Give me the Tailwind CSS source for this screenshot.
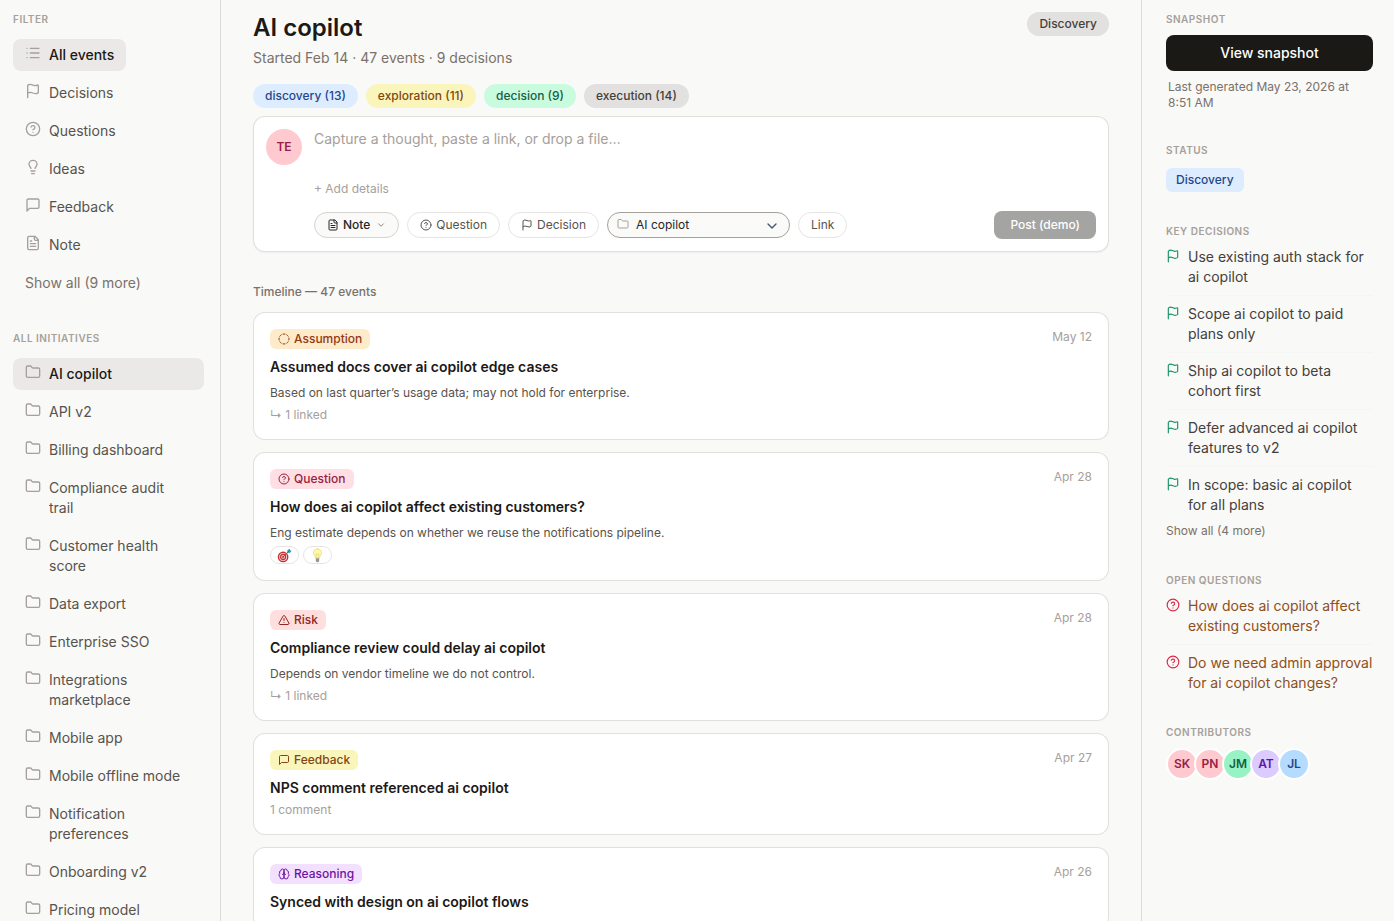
<!DOCTYPE html>
<html lang="en">
<head>
	<meta charset="UTF-8">
	<meta name="viewport" content="width=device-width, initial-scale=1.0">
	<title>AI copilot</title>
	<script src="https://cdn.jsdelivr.net/npm/@tailwindcss/browser@4"></script>
</head>
<body class="bg-[#f9f9f7] font-['Inter',sans-serif] text-stone-700">

	<!-- icons -->
	<svg class="hidden">
		<symbol id="list" viewBox="0 0 24 24"><path d="M3 5h.01M3 12h.01M3 19h.01M8 5h13M8 12h13M8 19h13"/></symbol>
		<symbol id="flag" viewBox="0 0 24 24"><path d="M4 22V4a1 1 0 0 1 .4-.8A6 6 0 0 1 8 2c3 0 5 2 7.333 2q2 0 3.067-.8A1 1 0 0 1 20 4v10a1 1 0 0 1-.4.8A6 6 0 0 1 16 16c-3 0-5-2-8-2a6 6 0 0 0-4 1.528"/></symbol>
		<symbol id="question" viewBox="0 0 24 24"><circle cx="12" cy="12" r="10"/><path d="M9.09 9a3 3 0 0 1 5.83 1c0 2-3 3-3 3M12 17h.01"/></symbol>
		<symbol id="bulb" viewBox="0 0 24 24"><path d="M15 14c.2-1 .7-1.7 1.5-2.5 1-.9 1.5-2.2 1.5-3.5A6 6 0 0 0 6 8c0 1 .2 2.2 1.5 3.5.7.7 1.3 1.5 1.5 2.5M9 18h6M10 22h4"/></symbol>
		<symbol id="message" viewBox="0 0 24 24"><path d="M21 15a2 2 0 0 1-2 2H7l-4 4V5a2 2 0 0 1 2-2h14a2 2 0 0 1 2 2z"/></symbol>
		<symbol id="file" viewBox="0 0 24 24"><path d="M15 2H6a2 2 0 0 0-2 2v16a2 2 0 0 0 2 2h12a2 2 0 0 0 2-2V7zM14 2v4a2 2 0 0 0 2 2h4M10 9H8M16 13H8M16 17H8"/></symbol>
		<symbol id="folder" viewBox="0 0 24 24"><path d="M20 20a2 2 0 0 0 2-2V8a2 2 0 0 0-2-2h-7.9a2 2 0 0 1-1.69-.9L9.6 3.9A2 2 0 0 0 7.93 3H4a2 2 0 0 0-2 2v13a2 2 0 0 0 2 2Z"/></symbol>
		<symbol id="dashed" viewBox="0 0 24 24"><path d="M10.1 2.182a10 10 0 0 1 3.8 0M13.9 21.818a10 10 0 0 1-3.8 0M17.609 3.721a10 10 0 0 1 2.69 2.7M2.182 13.9a10 10 0 0 1 0-3.8M20.279 17.609a10 10 0 0 1-2.7 2.69M21.818 10.1a10 10 0 0 1 0 3.8M3.721 6.391a10 10 0 0 1 2.7-2.69M6.391 20.279a10 10 0 0 1-2.69-2.7"/></symbol>
		<symbol id="alert" viewBox="0 0 24 24"><path d="m21.73 18-8-14a2 2 0 0 0-3.48 0l-8 14A2 2 0 0 0 4 21h16a2 2 0 0 0 1.73-3M12 9v4M12 17h.01"/></symbol>
		<symbol id="brain" viewBox="0 0 24 24"><path d="M12 5a3 3 0 1 0-5.997.125 4 4 0 0 0-2.526 5.77 4 4 0 0 0 .556 6.588A4 4 0 1 0 12 18ZM12 5a3 3 0 1 1 5.997.125 4 4 0 0 1 2.526 5.77 4 4 0 0 1-.556 6.588A4 4 0 1 1 12 18ZM15 13a4.5 4.5 0 0 1-3-4 4.5 4.5 0 0 1-3 4"/></symbol>
		<symbol id="chevron" viewBox="0 0 24 24"><path d="m6 9 6 6 6-6"/></symbol>
		<!-- reactions -->
		<symbol id="target" viewBox="0 0 16 16">
			<g stroke="none">
				<circle cx="6.5" cy="9.5" r="5.7" fill="#c5302f"/>
				<circle cx="6.5" cy="9.5" r="4.2" fill="#f3dcdc"/>
				<circle cx="6.5" cy="9.5" r="3.3" fill="#c5302f"/>
				<circle cx="6.5" cy="9.5" r="2" fill="#f3dcdc"/>
				<circle cx="6.5" cy="9.5" r="1.1" fill="#c5302f"/>
				<path d="M11 5V2.5L13.5.8l.5 1.6 1.7.6L13.600 5.200z" fill="#2f9fb8"/>
			</g>
			<path d="M6.500 9.500 13 3" stroke="#3b6f86" stroke-width="1"/>
		</symbol>
		<symbol id="lamp" viewBox="0 0 16 16">
			<path d="M8 .8a4.300 4.300 0 0 0-4.300 4.300c0 2.200 1.900 3.200 2.300 5.700h4c.4-2.500 2.300-3.500 2.300-5.700A4.300 4.300 0 0 0 8 .8z" fill="#fdf7b0" stroke="#efe27a" stroke-width="1"/>
			<path d="M7 10.500 6.400 6.200l1.600.8 1.600-.8L9 10.500" fill="none" stroke="#e3cf62" stroke-width=".6"/>
			<path d="M6.200 11h3.600v2.800L8.800 15.200H7.200L6.200 13.800z" fill="#96968f" stroke="none"/>
		</symbol>
	</svg>

	<div class="flex h-screen [&_svg]:shrink-0 [&_svg]:fill-none [&_svg]:stroke-current [&_svg]:[stroke-linecap:round] [&_svg]:[stroke-linejoin:round] [&_svg]:stroke-2">

		<!-- sidebar -->
		<aside class="w-[221px] shrink-0 overflow-y-auto [scrollbar-width:none] border-r border-stone-300/80 pt-3 pb-6 pl-[13px] pr-4 text-sm">
			<h2 class="text-[10px] leading-[15px] font-semibold tracking-wider uppercase text-stone-400">Filter</h2>
			<nav class="mt-3 flex flex-col items-start gap-1.5 [&_svg]:size-4 [&_svg]:text-stone-400">
				<a href="#" class="flex gap-2 rounded-lg bg-stone-200/80 px-3 py-1.5 font-medium text-stone-900"><svg><use href="#list"/></svg>All events</a>
				<a href="#" class="flex gap-2 rounded-lg px-3 py-1.5 text-stone-600"><svg><use href="#flag"/></svg>Decisions</a>
				<a href="#" class="flex gap-2 rounded-lg px-3 py-1.5 text-stone-600"><svg><use href="#question"/></svg>Questions</a>
				<a href="#" class="flex gap-2 rounded-lg px-3 py-1.5 text-stone-600"><svg><use href="#bulb"/></svg>Ideas</a>
				<a href="#" class="flex gap-2 rounded-lg px-3 py-1.5 text-stone-600"><svg><use href="#message"/></svg>Feedback</a>
				<a href="#" class="flex gap-2 rounded-lg px-3 py-1.5 text-stone-600"><svg><use href="#file"/></svg>Note</a>
				<button type="button" class="px-3 py-1.5 text-stone-500">Show all (9 more)</button>
			</nav>

			<h2 class="mt-8 text-[10px] leading-[15px] font-semibold tracking-wider uppercase text-stone-400">All initiatives</h2>
			<nav class="mt-3 flex flex-col gap-1.5 [&_svg]:size-4 [&_svg]:text-stone-400">
				<a href="#" class="flex gap-2 rounded-lg bg-stone-200/80 px-3 py-1.5 font-medium text-stone-900"><svg><use href="#folder"/></svg>AI copilot</a>
				<a href="#" class="flex gap-2 rounded-lg px-3 py-1.5 text-stone-600"><svg><use href="#folder"/></svg>API v2</a>
				<a href="#" class="flex gap-2 rounded-lg px-3 py-1.5 text-stone-600"><svg><use href="#folder"/></svg>Billing dashboard</a>
				<a href="#" class="flex gap-2 rounded-lg px-3 py-1.5 text-stone-600"><svg><use href="#folder"/></svg>Compliance audit trail</a>
				<a href="#" class="flex gap-2 rounded-lg px-3 py-1.5 text-stone-600"><svg><use href="#folder"/></svg>Customer health score</a>
				<a href="#" class="flex gap-2 rounded-lg px-3 py-1.5 text-stone-600"><svg><use href="#folder"/></svg>Data export</a>
				<a href="#" class="flex gap-2 rounded-lg px-3 py-1.5 text-stone-600"><svg><use href="#folder"/></svg>Enterprise SSO</a>
				<a href="#" class="flex gap-2 rounded-lg px-3 py-1.5 text-stone-600"><svg><use href="#folder"/></svg>Integrations marketplace</a>
				<a href="#" class="flex gap-2 rounded-lg px-3 py-1.5 text-stone-600"><svg><use href="#folder"/></svg>Mobile app</a>
				<a href="#" class="flex gap-2 rounded-lg px-3 py-1.5 text-stone-600"><svg><use href="#folder"/></svg>Mobile offline mode</a>
				<a href="#" class="flex gap-2 rounded-lg px-3 py-1.5 text-stone-600"><svg><use href="#folder"/></svg>Notification preferences</a>
				<a href="#" class="flex gap-2 rounded-lg px-3 py-1.5 text-stone-600"><svg><use href="#folder"/></svg>Onboarding v2</a>
				<a href="#" class="flex gap-2 rounded-lg px-3 py-1.5 text-stone-600"><svg><use href="#folder"/></svg>Pricing model</a>
			</nav>
		</aside>

		<!-- timeline -->
		<main class="min-w-0 flex-1 overflow-y-auto [scrollbar-width:none] px-8 pt-3 pb-8">
			<header class="flex items-start justify-between">
				<div>
					<h1 class="text-2xl font-semibold text-stone-900">AI copilot</h1>
					<p class="mt-1 text-sm text-stone-500">Started Feb 14 · 47 events · 9 decisions</p>
				</div>
				<span class="rounded-full bg-[#e2e1df] px-3 py-1 text-xs font-medium text-stone-700">Discovery</span>
			</header>

			<div class="mt-4 flex flex-wrap gap-2 text-xs font-medium">
				<button type="button" class="rounded-full bg-[#deecff] px-3 py-1 text-[#24478a]">discovery (13)</button>
				<button type="button" class="rounded-full bg-[#faf5bb] px-3 py-1 text-[#824613]">exploration (11)</button>
				<button type="button" class="rounded-full bg-[#c9fbde] px-3 py-1 text-[#155f46]">decision (9)</button>
				<button type="button" class="rounded-full bg-[#e2e1df] px-3 py-1 text-stone-700">execution (14)</button>
			</div>

			<form class="mt-2 flex gap-3 rounded-xl border border-stone-300/70 bg-white p-3 shadow-xs">
				<div class="flex size-9 shrink-0 items-center justify-center rounded-full bg-[#ffc9d0] text-xs font-semibold text-[#982044]">TE</div>
				<div class="min-w-0 flex-1">
					<textarea aria-label="Capture" placeholder="Capture a thought, paste a link, or drop a file…" class="block h-11 w-full resize-none text-sm outline-none placeholder:text-stone-400"></textarea>
					<button type="button" class="mt-2 block text-xs text-stone-400">+ Add details</button>
					<div class="mt-3.5 flex items-center gap-2 text-xs text-stone-600">
						<button type="button" class="flex items-center gap-1 rounded-full border border-stone-300 bg-stone-50 px-3 py-1 font-medium text-stone-800"><svg class="size-3"><use href="#file"/></svg>Note<svg class="ml-0.5 size-2.5 text-stone-500"><use href="#chevron"/></svg></button>
						<button type="button" class="flex items-center gap-1 rounded-full border border-stone-200 bg-white px-3 py-1"><svg class="size-3"><use href="#question"/></svg>Question</button>
						<button type="button" class="flex items-center gap-1 rounded-full border border-stone-200 bg-white px-3 py-1"><svg class="size-3"><use href="#flag"/></svg>Decision</button>
						<div class="relative">
							<select aria-label="Initiative" class="w-[183px] appearance-none rounded-full border border-stone-400 bg-stone-50 py-1 pl-7 pr-8 text-xs text-stone-800">
								<option>AI copilot</option>
								<option>API v2</option>
							</select>
							<svg class="pointer-events-none absolute top-1.5 left-2.5 size-3 text-stone-400"><use href="#folder"/></svg>
							<svg class="pointer-events-none absolute top-1.5 right-2.5 size-4 text-slate-600"><use href="#chevron"/></svg>
						</div>
						<button type="button" class="rounded-full border border-stone-200 bg-white px-3 py-1">Link</button>
						<button type="button" class="ml-auto rounded-lg bg-[#a4a4a2] px-4 py-1.5 font-medium text-white">Post (demo)</button>
					</div>
				</div>
			</form>

			<h2 class="mt-8 text-xs font-medium text-stone-500">Timeline — 47 events</h2>

			<div class="mt-3 flex flex-col gap-3 text-xs">
				<article class="rounded-xl border border-stone-300/70 bg-white p-4">
					<div class="flex items-start justify-between">
						<span class="flex items-center gap-1 rounded-md bg-[#fdebc9] px-2 py-0.5 font-medium text-[#933817]"><svg class="size-3"><use href="#dashed"/></svg>Assumption</span>
						<time class="text-stone-400">May 12</time>
					</div>
					<h3 class="mt-2 text-sm font-semibold text-stone-900">Assumed docs cover ai copilot edge cases</h3>
					<p class="mt-2 text-stone-600">Based on last quarter’s usage data; may not hold for enterprise.</p>
					<p class="mt-1.5 text-stone-400">↳ 1 linked</p>
				</article>

				<article class="rounded-xl border border-stone-300/70 bg-white p-4">
					<div class="flex items-start justify-between">
						<span class="flex items-center gap-1 rounded-md bg-[#ffdfe3] px-2 py-0.5 font-medium text-[#982044]"><svg class="size-3"><use href="#question"/></svg>Question</span>
						<time class="text-stone-400">Apr 28</time>
					</div>
					<h3 class="mt-2 text-sm font-semibold text-stone-900">How does ai copilot affect existing customers?</h3>
					<p class="mt-2 text-stone-600">Eng estimate depends on whether we reuse the notifications pipeline.</p>
					<div class="mt-[5px] flex gap-1">
						<button type="button" aria-label="Target" class="flex h-[18px] items-center rounded-full border border-stone-200 px-1.5"><svg class="size-[15px]"><use href="#target"/></svg></button>
						<button type="button" aria-label="Idea" class="flex h-[18px] items-center rounded-full border border-stone-200 px-1.5"><svg class="size-[15px]"><use href="#lamp"/></svg></button>
					</div>
				</article>

				<article class="rounded-xl border border-stone-300/70 bg-white p-4">
					<div class="flex items-start justify-between">
						<span class="flex items-center gap-1 rounded-md bg-[#ffdfdd] px-2 py-0.5 font-medium text-[#922620]"><svg class="size-3"><use href="#alert"/></svg>Risk</span>
						<time class="text-stone-400">Apr 28</time>
					</div>
					<h3 class="mt-2 text-sm font-semibold text-stone-900">Compliance review could delay ai copilot</h3>
					<p class="mt-2 text-stone-600">Depends on vendor timeline we do not control.</p>
					<p class="mt-1.5 text-stone-400">↳ 1 linked</p>
				</article>

				<article class="rounded-xl border border-stone-300/70 bg-white p-4">
					<div class="flex items-start justify-between">
						<span class="flex items-center gap-1 rounded-md bg-[#faf5bb] px-2 py-0.5 font-medium text-[#824613]"><svg class="size-3"><use href="#message"/></svg>Feedback</span>
						<time class="text-stone-400">Apr 27</time>
					</div>
					<h3 class="mt-2 text-sm font-semibold text-stone-900">NPS comment referenced ai copilot</h3>
					<p class="mt-1 text-stone-400">1 comment</p>
				</article>

				<article class="rounded-xl border border-stone-300/70 bg-white p-4">
					<div class="flex items-start justify-between">
						<span class="flex items-center gap-1 rounded-md bg-[#f3e0ff] px-2 py-0.5 font-medium text-[#6d12a6]"><svg class="size-3"><use href="#brain"/></svg>Reasoning</span>
						<time class="text-stone-400">Apr 26</time>
					</div>
					<h3 class="mt-2 text-sm font-semibold text-stone-900">Synced with design on ai copilot flows</h3>
				</article>
			</div>
		</main>

		<!-- details -->
		<aside class="w-[253px] shrink-0 overflow-y-auto [scrollbar-width:none] border-l border-stone-300/80 pt-3 pb-6 pl-6 pr-[21px]">
			<h2 class="text-[10px] leading-[15px] font-semibold tracking-wider uppercase text-stone-400">Snapshot</h2>
			<button type="button" class="mt-2 w-full rounded-lg bg-[#1a1916] py-2 text-sm font-medium text-white">View snapshot</button>
			<p class="mt-2 px-0.5 text-xs text-stone-500">Last generated May 23, 2026 at 8:51 AM</p>

			<h2 class="mt-8 text-[10px] leading-[15px] font-semibold tracking-wider uppercase text-stone-400">Status</h2>
			<div class="mt-2.5 flex">
				<span class="rounded-md bg-[#deecff] px-2.5 py-1 text-xs font-medium text-[#24478a]">Discovery</span>
			</div>

			<h2 class="mt-8 text-[10px] leading-[15px] font-semibold tracking-wider uppercase text-stone-400">Key decisions</h2>
			<ul class="mt-2 text-sm text-stone-700 [&_svg]:mt-0.5 [&_svg]:size-3.5 [&_svg]:text-[#1d9468]">
				<li class="flex gap-2 border-b border-stone-100 pb-2"><svg><use href="#flag"/></svg><a href="#">Use existing auth stack for ai copilot</a></li>
				<li class="flex gap-2 border-b border-stone-100 py-2"><svg><use href="#flag"/></svg><a href="#">Scope ai copilot to paid plans only</a></li>
				<li class="flex gap-2 border-b border-stone-100 py-2"><svg><use href="#flag"/></svg><a href="#">Ship ai copilot to beta cohort first</a></li>
				<li class="flex gap-2 border-b border-stone-100 py-2"><svg><use href="#flag"/></svg><a href="#">Defer advanced ai copilot features to v2</a></li>
				<li class="flex gap-2 pt-2"><svg><use href="#flag"/></svg><a href="#">In scope: basic ai copilot for all plans</a></li>
			</ul>
			<button type="button" class="mt-1.5 block py-0.5 text-xs text-stone-500">Show all (4 more)</button>

			<h2 class="mt-8 text-[10px] leading-[15px] font-semibold tracking-wider uppercase text-stone-400">Open questions</h2>
			<ul class="mt-2 text-sm text-[#8f4f20] [&_svg]:mt-0.5 [&_svg]:size-3.5 [&_svg]:text-[#dc2848]">
				<li class="flex gap-2 border-b border-stone-100 pb-2"><svg><use href="#question"/></svg><a href="#">How does ai copilot affect existing customers?</a></li>
				<li class="flex gap-2 pt-2"><svg><use href="#question"/></svg><a href="#">Do we need admin approval for ai copilot changes?</a></li>
			</ul>

			<h2 class="mt-8 text-[10px] leading-[15px] font-semibold tracking-wider uppercase text-stone-400">Contributors</h2>
			<div class="mt-2 flex -space-x-1 text-xs font-semibold">
				<span class="flex size-8 items-center justify-center rounded-full border-2 border-white bg-[#ffc9d0] text-[#982044]">SK</span>
				<span class="flex size-8 items-center justify-center rounded-full border-2 border-white bg-[#ffc9d0] text-[#982044]">PN</span>
				<span class="flex size-8 items-center justify-center rounded-full border-2 border-white bg-[#98f3c4] text-[#155f46]">JM</span>
				<span class="flex size-8 items-center justify-center rounded-full border-2 border-white bg-[#dccbff] text-[#5b16a8]">AT</span>
				<span class="flex size-8 items-center justify-center rounded-full border-2 border-white bg-[#b5dcff] text-[#24478a]">JL</span>
			</div>
		</aside>

	</div>

</body>
</html>
